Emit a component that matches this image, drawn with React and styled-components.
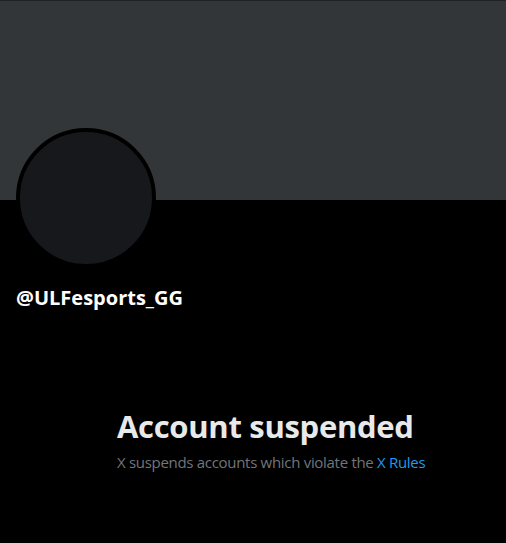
import React from 'react';
import styled, { createGlobalStyle } from 'styled-components';

const GlobalStyle = createGlobalStyle`
    html, body {
        margin: 0;
        padding: 0;
        background-color: #000000;
    }
    body {
        font-family: "Open Sans", "Liberation Sans", sans-serif;
        color: #e7e9ea;
    }
`;

const Page = styled.div`
    width: 506px;
    height: 543px;
    background-color: #000000;
    overflow: hidden;
    display: flex;
    flex-direction: column;
`;

const Banner = styled.div`
    height: 199px;
    background-color: #333639;
    border-top: 1px solid #202224;
    flex-shrink: 0;
`;

const Profile = styled.div`
    padding: 0 16px;
    display: flex;
    flex-direction: column;
`;

const Avatar = styled.div`
    width: 132px;
    height: 132px;
    margin-top: -72px;
    border-radius: 50%;
    border: 4px solid #000000;
    background-color: #16181c;
`;

const Handle = styled.div`
    margin-top: 16px;
    font-size: 20px;
    font-weight: 700;
    line-height: 28px;
    color: #ffffff;
`;

const Notice = styled.div`
    width: 336px;
    box-sizing: border-box;
    margin: 96px auto 0;
    padding: 0 32px;
    display: flex;
    flex-direction: column;
    white-space: nowrap;
`;

const Title = styled.div`
    font-size: 31px;
    font-weight: 700;
    line-height: 36px;
    letter-spacing: -0.3px;
    color: #e7e9ea;
`;

const Subtitle = styled.div`
    margin-top: 8px;
    font-size: 15px;
    line-height: 20px;
    letter-spacing: -0.3px;
    color: #71767b;
`;

const RulesLink = styled.a`
    color: #1d9bf0;
    text-decoration: none;
`;

const App = () => {
    return (
        <Page>
            <GlobalStyle />
            <Banner />
            <Profile>
                <Avatar />
                <Handle>@ULFesports_GG</Handle>
            </Profile>
            <Notice>
                <Title>Account suspended</Title>
                <Subtitle>
                    X suspends accounts which violate the <RulesLink href="#">X Rules</RulesLink>
                </Subtitle>
            </Notice>
        </Page>
    );
}

export default App;
